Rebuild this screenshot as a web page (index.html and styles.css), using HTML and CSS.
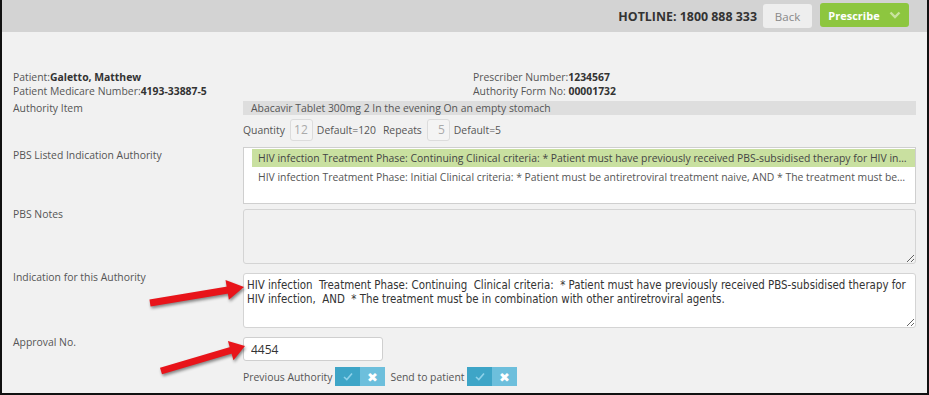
FILE: index.html
```html
<!DOCTYPE html>
<html lang="en">
<head>
  <meta charset="UTF-8" />
  <title>PBS Authority</title>
  <link rel="stylesheet" href="styles.css">
</head>
<body>
  <div class="frame">

    <!-- top bar -->
    <header class="topbar">
      <span class="hotline">HOTLINE: 1800 888 333</span>
      <button class="btn btn-back">Back</button>
      <button class="btn btn-prescribe">Prescribe
        <svg class="chev" width="12" height="8" viewBox="0 0 12 8"><path d="M1.5 1.5 L6 6 L10.5 1.5" fill="none" stroke="#c9e39e" stroke-width="2.4"/></svg>
      </button>
    </header>

    <main class="form">
      <div class="patient">
        <div class="pcol">
          <div>Patient:<b>Galetto, Matthew</b></div>
          <div>Patient Medicare Number:<b>4193-33887-5</b></div>
        </div>
        <div class="pcol">
          <div>Prescriber Number:<b>1234567</b></div>
          <div>Authority Form No: <b>00001732</b></div>
        </div>
      </div>

      <div class="row row-item">
        <label>Authority Item</label>
        <div class="item-bar">Abacavir Tablet 300mg 2 In the evening On an empty stomach</div>
      </div>

      <div class="row row-qty">
        <span></span>
        <div class="qty">
          <span>Quantity</span>
          <span class="num-box">12</span>
          <span>Default=120</span>
          <span class="rep">Repeats</span>
          <span class="num-box">5</span>
          <span>Default=5</span>
        </div>
      </div>

      <div class="row row-list">
        <label>PBS Listed Indication Authority</label>
        <div class="listbox">
          <div class="opt selected">HIV infection Treatment Phase: Continuing Clinical criteria: * Patient must have previously received PBS-subsidised therapy for HIV infection, AND * The treatment must be in combination with other antiretroviral agents.</div>
          <div class="opt">HIV infection Treatment Phase: Initial Clinical criteria: * Patient must be antiretroviral treatment naive, AND * The treatment must be in combination with other antiretroviral agents.</div>
        </div>
      </div>

      <div class="row row-notes">
        <label>PBS Notes</label>
        <textarea class="area area-notes" readonly></textarea>
      </div>

      <div class="row row-ind">
        <label>Indication for this Authority</label>
        <textarea class="area area-ind">HIV infection  Treatment Phase: Continuing  Clinical criteria:  * Patient must have previously received PBS-subsidised therapy for HIV infection,  AND  * The treatment must be in combination with other antiretroviral agents.</textarea>
      </div>

      <div class="row row-approval">
        <label>Approval No.</label>
        <input class="approval" type="text" value="4454">
      </div>

      <div class="row row-toggles">
        <span></span>
        <div class="toggles">
          <span>Previous Authority</span>
          <span class="toggle">
            <span class="t-on"><svg width="10" height="9" viewBox="0 0 10 9"><path d="M1 5 L3.8 7.5 L9 1.5" fill="none" stroke="#8fd2ea" stroke-width="1.6"/></svg></span>
            <span class="t-off">&#x2716;</span>
          </span>
          <span>Send to patient</span>
          <span class="toggle">
            <span class="t-on"><svg width="10" height="9" viewBox="0 0 10 9"><path d="M1 5 L3.8 7.5 L9 1.5" fill="none" stroke="#8fd2ea" stroke-width="1.6"/></svg></span>
            <span class="t-off">&#x2716;</span>
          </span>
        </div>
      </div>
    </main>

    <!-- annotation arrows -->
    <svg class="arrows" width="929" height="395" viewBox="0 0 929 395">
      <g class="arrow">
        <line x1="150" y1="303" x2="228" y2="290" stroke="#e8141a" stroke-width="7"/>
        <polygon points="244,287 228.9,299.8 225.5,280" fill="#e8141a"/>
      </g>
      <g class="arrow">
        <line x1="161" y1="371" x2="232" y2="350" stroke="#e8141a" stroke-width="7"/>
        <polygon points="245,346 233.5,360.3 227.9,341.1" fill="#e8141a"/>
      </g>
    </svg>
  </div>
</body>
</html>
```

FILE: styles.css
```css
* { box-sizing: border-box; margin: 0; padding: 0; }

html, body {
  width: 929px;
  height: 395px;
  overflow: hidden;
  background: #f1f1f1;
  font-family: 'Open Sans', sans-serif;
  font-size: 10.4px;
  color: #555;
}

.frame {
  position: relative;
  width: 929px;
  height: 395px;
  border: 2px solid #111;
  border-top: none;
  background: #f1f1f1;
}

/* top bar */
.topbar {
  height: 32px;
  background: #d3d3d3;
  display: flex;
  align-items: center;
  justify-content: flex-end;
  padding-right: 18px;
}

.hotline {
  font-weight: 700;
  font-size: 12.4px;
  color: #333;
  margin-right: 6px;
}

.btn {
  font-family: 'Open Sans', sans-serif;
  font-size: 11px;
  border: none;
  border-radius: 3px;
  height: 24px;
}

.btn-back {
  width: 49px;
  background: #eeeeee;
  color: #888;
  font-size: 11.5px;
  margin-right: 8px;
}

.btn-prescribe {
  width: 89px;
  background: #8dc63f;
  color: #fff;
  font-weight: 700;
  display: flex;
  align-items: center;
  justify-content: center;
  gap: 9px;
  margin-top: -2px;
}

/* form */
.form {
  padding: 38px 9px 0 11px;
}

.patient {
  display: grid;
  grid-template-columns: 460px 1fr;
  line-height: 14px;
}

.patient b { color: #333; }

.row {
  display: grid;
  grid-template-columns: 230px 673px;
}

.row label {
  line-height: 14px;
}

.row-item { margin-top: 3px; }

.item-bar {
  background: #dedede;
  height: 14px;
  line-height: 14px;
  padding-left: 8px;
  color: #555;
}

.row-qty { margin-top: 4px; }

.qty {
  display: flex;
  align-items: center;
  height: 22px;
  gap: 4px;
}

.qty .rep { margin-left: 3px; }

.num-box {
  width: 23px;
  height: 22px;
  border: 1px solid #dcdcdc;
  border-radius: 3px;
  background: #f4f4f4;
  color: #aaa;
  font-size: 12px;
  line-height: 20px;
  text-align: right;
  padding-right: 4px;
  margin-left: 1px;
}

.row-list { margin-top: 6px; }
.row-list label { margin-top: 1px; }

.listbox {
  height: 57px;
  background: #fff;
  border: 1px solid #cfcfcf;
  padding: 1px 0 0 8px;
  color: #555;
}

.opt {
  height: 18px;
  line-height: 18px;
  padding: 0 8px 0 6px;
  white-space: nowrap;
  overflow: hidden;
  text-overflow: ellipsis;
  margin-bottom: 1px;
}

.opt.selected {
  background: #c9e0a0;
  color: #444;
}

.row-notes { margin-top: 5px; }
.row-notes label { margin-top: -2px; }

.area {
  width: 673px;
  height: 55px;
  border: 1px solid #d4d4d4;
  border-radius: 3px;
  resize: vertical;
  outline: none;
}

.area-notes { background: #f1f1f1; }

.row-ind { margin-top: 9px; }
.row-ind label { margin-top: -3px; }

.area-ind {
  background: #fff;
  font-family: 'DejaVu Sans Condensed', 'Open Sans', sans-serif;
  font-size: 11.4px;
  line-height: 14px;
  color: #333;
  padding: 4px 3px;
  overflow: hidden;
}

.row-approval { margin-top: 9px; }
.row-approval label { margin-top: -2px; }

.approval {
  width: 140px;
  height: 24px;
  border: 1px solid #cfcfcf;
  border-radius: 3px;
  background: #fff;
  font-family: 'Open Sans', sans-serif;
  font-size: 12px;
  color: #333;
  padding: 0 7px;
  outline: none;
}

.row-toggles { margin-top: 6px; }

.toggles {
  display: flex;
  align-items: center;
  gap: 3px;
}

.toggle {
  display: flex;
  width: 50px;
  height: 19px;
  margin-right: 2px;
}

.t-on, .t-off {
  flex: 1;
  display: flex;
  align-items: center;
  justify-content: center;
}

.t-on { background: #3ea5c7; }

.t-off {
  background: #6dbfdc;
  color: #fff;
  font-size: 13px;
}

/* annotation overlay */
.arrows {
  position: absolute;
  top: 0;
  left: -2px;
  pointer-events: none;
}

.arrow { filter: drop-shadow(1px 2px 1.5px rgba(0, 0, 0, 0.45)); }
```
